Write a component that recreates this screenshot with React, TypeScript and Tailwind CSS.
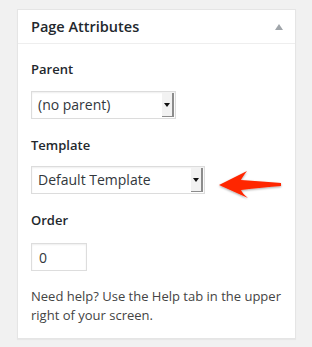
const SelectBox = ({ value, width }: { value: string; width: string }) => (
  <div
    className={`flex h-[28px] ${width} items-stretch border border-[#dcdcdc] bg-white shadow-[inset_0_1px_2px_rgba(0,0,0,0.07)]`}
  >
    <span className="flex-1 pl-[6px] text-[14px] leading-[26px] text-[#32373c]">{value}</span>
    <span className="my-[1px] mr-[1px] flex w-[12px] items-center justify-center border-r-2 border-b border-[#8c8c8c] bg-[#f2f2f2]">
      <svg width="6" height="4" viewBox="0 0 6 4">
        <path d="M0 0 L6 0 L3 4 Z" fill="#111" />
      </svg>
    </span>
  </div>
);

const Label = ({ children }: { children: string }) => (
  <p className="text-[13px] font-semibold leading-[20px] text-[#23282d]">{children}</p>
);

export default function App() {
  return (
    <div className="min-h-[347px] bg-[#f1f1f1] pt-[9px] pl-[17px] font-['Open_Sans',sans-serif]">
      <div className="w-[279px] border border-[#e5e5e5] bg-white shadow-[0_1px_1px_rgba(0,0,0,0.04)]">
        <div className="flex h-[34px] items-center justify-between border-b border-[#eeeeee] pl-[13px] pr-[12px]">
          <h3 className="text-[14.5px] font-semibold text-[#23282d]">Page Attributes</h3>
          <svg width="8" height="6" viewBox="0 0 8 6">
            <path d="M0 6 L4 0 L8 6 Z" fill="#a0a5aa" />
          </svg>
        </div>

        <div className="px-[13px] pt-[15px] pb-[13px]">
          <Label>Parent</Label>
          <div className="mt-[12px]">
            <SelectBox value="(no parent)" width="w-[145px]" />
          </div>

          <div className="mt-[16px]">
            <Label>Template</Label>
          </div>
          <div className="relative mt-[11px]">
            <SelectBox value="Default Template" width="w-[174px]" />
            <svg
              className="absolute top-[4px] left-[186px]"
              width="68"
              height="30"
              viewBox="0 0 68 30"
            >
              <defs>
                <filter id="sh" x="-20%" y="-30%" width="140%" height="160%">
                  <feDropShadow dx="0" dy="1" stdDeviation="1.2" floodColor="#000" floodOpacity="0.35" />
                </filter>
              </defs>
              <path
                d="M2 15 L30 1 C27 5 25 8 24 10 C38 11 52 12 64 13 L64 16 C52 17 38 18 24 20 C25 22 27 25 31 28 Z"
                fill="#ff2600"
                filter="url(#sh)"
              />
            </svg>
          </div>

          <div className="mt-[16px]">
            <Label>Order</Label>
          </div>
          <div className="mt-[13px] flex h-[28px] w-[56px] items-center border border-[#dddddd] bg-white pl-[7px] shadow-[inset_0_1px_2px_rgba(0,0,0,0.07)]">
            <span className="text-[14px] text-[#32373c]">0</span>
          </div>

          <p className="mt-[16px] text-[13px] leading-[19px] text-[#444444]">
            Need help? Use the Help tab in the upper right of your screen.
          </p>
        </div>
      </div>
    </div>
  );
}
